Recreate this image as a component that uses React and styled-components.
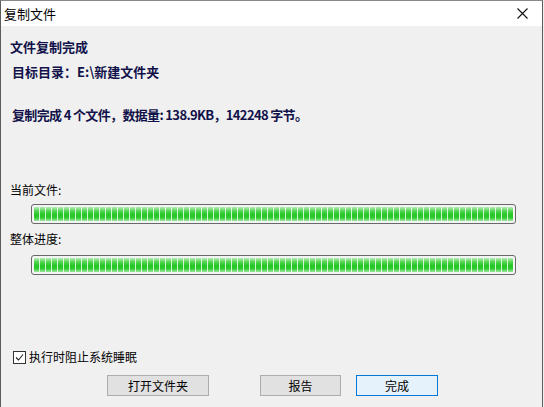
import React from "react";
import styled, { createGlobalStyle } from "styled-components";

const Global = createGlobalStyle`
  html, body { margin: 0; padding: 0; background: #f0f0f0; }
  body { font-family: "Noto Sans CJK SC", "Noto Sans", sans-serif; }
`;

const Window = styled.div`
  width: 543px;
  height: 407px;
  box-sizing: border-box;
  border-left: 1px solid #5c5c5c;
  border-right: 1px solid #5c5c5c;
  border-top: 1px solid #8a8a8a;
  background: #f0f0f0;
  display: flex;
  flex-direction: column;
  overflow: hidden;
`;

const TitleBar = styled.div`
  height: 25px;
  background: #ffffff;
  display: flex;
  align-items: center;
  justify-content: space-between;
  padding: 0 10px 0 3px;
  flex-shrink: 0;
`;

const Title = styled.span`
  font-size: 13px;
  color: #000;
  line-height: 1;
`;

const Close = styled.svg`
  width: 11px;
  height: 11px;
  margin-right: 4px;
`;

const Body = styled.div`
  flex: 1;
  display: flex;
  flex-direction: column;
  padding: 0 0 0 9px;
`;

const Heading = styled.div`
  font-size: 13px;
  font-weight: bold;
  color: #12124a;
  line-height: 16px;
  white-space: nowrap;
  letter-spacing: ${(p) => p.$ls || 0}px;
  margin-left: ${(p) => p.$indent || 0}px;
  margin-top: ${(p) => p.$top}px;
`;

const Label = styled.div`
  font-size: 12px;
  color: #000;
  line-height: 16px;
  margin-top: ${(p) => p.$top}px;
`;

const Bar = styled.div`
  margin-left: 21px;
  margin-top: ${(p) => p.$top}px;
  width: 485px;
  height: 20px;
  box-sizing: border-box;
  border: 1px solid #686868;
  border-radius: 3px;
  padding: 2px;
  background: #f4f4f4;
`;

const Fill = styled.div`
  height: 100%;
  border-radius: 1px;
  background:
    repeating-linear-gradient(90deg, transparent 0 5px, rgba(235, 250, 235, 0.85) 5px 6px),
    linear-gradient(180deg, #b7ebb7 0%, #4fd44f 30%, #25c625 55%, #2fca2f 75%, #9ee59e 100%);
`;

const CheckRow = styled.label`
  display: flex;
  align-items: center;
  gap: 3px;
  margin-top: ${(p) => p.$top}px;
  margin-left: 3px;
  font-size: 12px;
  color: #000;
  line-height: 16px;
`;

const Box = styled.span`
  width: 11px;
  height: 11px;
  border: 1px solid #333;
  background: #fff;
  display: inline-flex;
  align-items: center;
  justify-content: center;
`;

const ButtonRow = styled.div`
  display: flex;
  margin-top: 10px;
  margin-left: 97px;
`;

const Button = styled.button`
  width: ${(p) => p.$w}px;
  height: 21px;
  margin-left: ${(p) => p.$ml || 0}px;
  box-sizing: border-box;
  font-family: "Noto Sans CJK SC", "Noto Sans", sans-serif;
  font-size: 12px;
  line-height: 1;
  color: #000;
  padding: 0;
  border: 1px solid ${(p) => (p.$primary ? "#0078d7" : "#adadad")};
  background: ${(p) => (p.$primary ? "#e5f1fb" : "#e1e1e1")};
`;

export default function App() {
  return (
    <>
      <Global />
      <Window>
        <TitleBar>
          <Title>复制文件</Title>
          <Close viewBox="0 0 11 11">
            <path d="M0.5 0.5 L10.5 10.5 M10.5 0.5 L0.5 10.5" stroke="#111" strokeWidth="1.1" />
          </Close>
        </TitleBar>
        <Body>
          <Heading $top={13}>文件复制完成</Heading>
          <Heading $top={9} $indent={2}>目标目录：E:\新建文件夹</Heading>
          <Heading $top={27} $indent={2} $ls={-0.65}>复制完成 4 个文件，数据量: 138.9KB，142248 字节。</Heading>
          <Label $top={59}>当前文件:</Label>
          <Bar $top={6}><Fill /></Bar>
          <Label $top={7}>整体进度:</Label>
          <Bar $top={8}><Fill /></Bar>
          <CheckRow $top={74}>
            <Box>
              <svg width="9" height="9" viewBox="0 0 9 9">
                <path d="M1 4.5 L3.5 7 L8 1.5" fill="none" stroke="#222" strokeWidth="1.1" />
              </svg>
            </Box>
            执行时阻止系统睡眠
          </CheckRow>
          <ButtonRow>
            <Button $w={102}>打开文件夹</Button>
            <Button $w={81} $ml={51}>报告</Button>
            <Button $w={82} $ml={15} $primary>完成</Button>
          </ButtonRow>
        </Body>
      </Window>
    </>
  );
}
